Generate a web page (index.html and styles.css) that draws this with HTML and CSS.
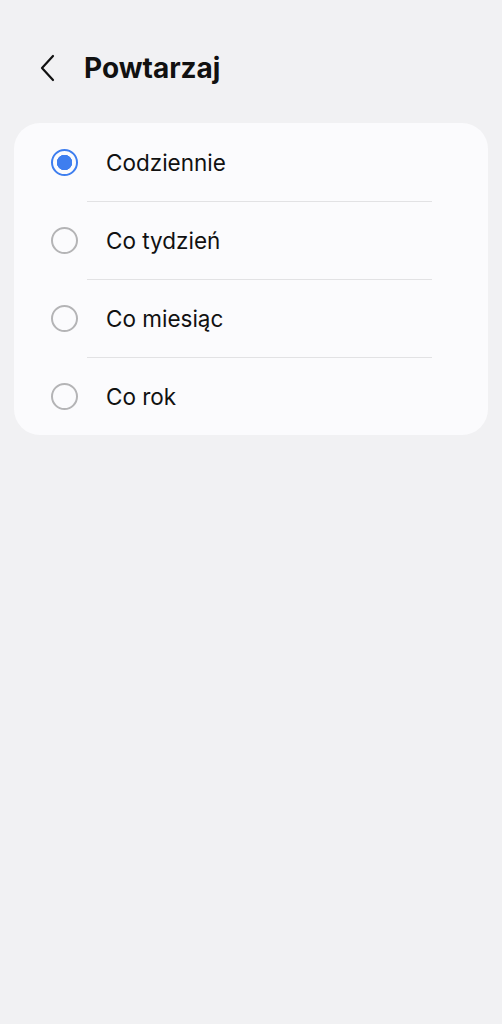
FILE: index.html
```html
<!DOCTYPE html>
<html lang="pl">
<head>
    <meta charset="UTF-8">
    <meta name="viewport" content="width=device-width, initial-scale=1.0">
    <title>Powtarzaj</title>
    <link rel="stylesheet" href="styles.css">
</head>
<body>
    <div class="header">
        <button class="back" aria-label="Wstecz">
            <svg width="18" height="28" viewBox="0 0 18 28">
                <path d="M15 2 L4 14 L15 26" fill="none" stroke="#111" stroke-width="2.2" stroke-linecap="round" stroke-linejoin="round"/>
            </svg>
        </button>
        <h1>Powtarzaj</h1>
    </div>

    <div class="card">
        <label class="option">
            <span class="radio checked"></span>
            <span class="text">Codziennie</span>
        </label>
        <label class="option">
            <span class="radio"></span>
            <span class="text">Co tydzień</span>
        </label>
        <label class="option">
            <span class="radio"></span>
            <span class="text">Co miesiąc</span>
        </label>
        <label class="option">
            <span class="radio"></span>
            <span class="text">Co rok</span>
        </label>
    </div>
</body>
</html>
```

FILE: styles.css
```css
body {
    font-family: Inter, Roboto, "Noto Sans", sans-serif;
    margin: 0;
    padding: 0;
    background-color: #f1f1f3;
    color: #111;
}
.header {
    display: flex;
    align-items: center;
    height: 34px;
    padding: 51px 0 38px 38px;
}
.back {
    width: 22px;
    height: 34px;
    padding: 0;
    border: none;
    background: none;
    display: flex;
    align-items: center;
}
.header h1 {
    margin: 0 0 0 24px;
    font-size: 28px;
    font-weight: bold;
}
.card {
    margin: 0 14px;
    background: #fbfbfd;
    border-radius: 26px;
    overflow: hidden;
}
.option {
    display: flex;
    align-items: center;
    height: 78px;
    padding-left: 37px;
    position: relative;
}
.option + .option::before {
    content: "";
    position: absolute;
    top: 0;
    left: 73px;
    right: 56px;
    height: 1px;
    background: #e2e2e4;
}
.radio {
    width: 23px;
    height: 23px;
    border: 2.5px solid #b4b4b6;
    border-radius: 50%;
}
.radio.checked {
    border-color: #3e7eef;
    background: radial-gradient(circle, #3e7eef 0 7.5px, transparent 8px);
}
.text {
    margin-left: 28px;
    font-size: 22.5px;
}
```
